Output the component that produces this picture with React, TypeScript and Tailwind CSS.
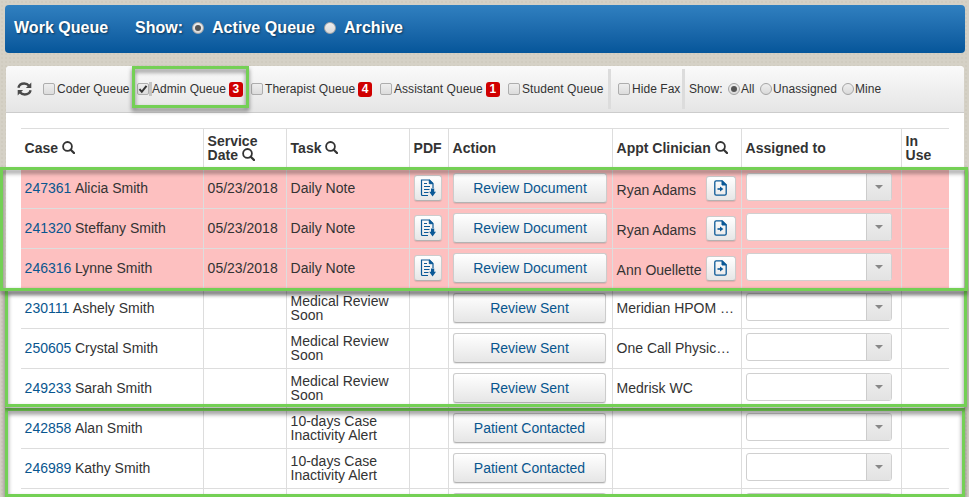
import React from "react";

type Row = { id: string; name: string; date?: string; task: string; pdf?: boolean; action: string; clinician?: string };

const rows: Row[] = [
  { id: "247361", name: "Alicia Smith", date: "05/23/2018", task: "Daily Note", pdf: true, action: "Review Document", clinician: "Ryan Adams" },
  { id: "241320", name: "Steffany Smith", date: "05/23/2018", task: "Daily Note", pdf: true, action: "Review Document", clinician: "Ryan Adams" },
  { id: "246316", name: "Lynne Smith", date: "05/23/2018", task: "Daily Note", pdf: true, action: "Review Document", clinician: "Ann Ouellette" },
  { id: "230111", name: "Ashely Smith", task: "Medical Review Soon", action: "Review Sent", clinician: "Meridian HPOM …" },
  { id: "250605", name: "Crystal Smith", task: "Medical Review Soon", action: "Review Sent", clinician: "One Call Physic…" },
  { id: "249233", name: "Sarah Smith", task: "Medical Review Soon", action: "Review Sent", clinician: "Medrisk WC" },
  { id: "242858", name: "Alan Smith", task: "10-days Case Inactivity Alert", action: "Patient Contacted" },
  { id: "246989", name: "Kathy Smith", task: "10-days Case Inactivity Alert", action: "Patient Contacted" },
  { id: "", name: "", task: "", action: "" },
];

const grid = "grid grid-cols-[182px_83px_123px_39px_164px_129px_160px_48px]";
const cell = "flex items-center border-l border-[#ddd] pl-[3.6px]";
const btn =
  "flex items-center justify-center rounded-[3px] border border-[#ccc] border-b-[#b3b3b3] bg-gradient-to-b from-white to-[#e6e6e6] shadow-[0_1px_1px_rgba(0,0,0,0.1)]";

function SearchIcon() {
  return (
    <svg className="ml-[4px] inline-block shrink-0" width="13" height="13" viewBox="0 0 13 13" fill="none" stroke="#333">
      <circle cx="5.5" cy="5.4" r="4.4" strokeWidth="1.8" />
      <path d="M8.7 8.7 12 12" strokeWidth="2.3" strokeLinecap="round" />
    </svg>
  );
}

function RefreshIcon() {
  return (
    <svg width="15" height="14" viewBox="0 0 15 14" fill="none" stroke="#4a4a4a" strokeWidth="2.4">
      <path d="M1.400 5.700C2 3.200 4.500 1.500 7.300 1.500c2.100 0 3.600.8 4.800 2.200" />
      <path d="M13.600 8.300c-.6 2.500-3.100 4.200-5.900 4.200-2.100 0-3.600-.8-4.800-2.200" />
      <path d="M14.300.5v5.400H8.900zM.7 13.500V8.100h5.400z" fill="#4a4a4a" stroke="none" />
    </svg>
  );
}

function PdfIcon() {
  return (
    <svg className="mb-px" width="16" height="18" viewBox="0 0 16 18" fill="none" stroke="#0a5896">
      <path d="M8 16.500H2.500c-.6 0-1-.4-1-1V1h8l3.500 3.500V9" strokeWidth="1.2" />
      <path d="M9.300 1v3.700H13z" fill="#0a5896" />
      <path d="M4 4.500h3M4 7.500h6M4 10.500h5.500M4 13.500h4.500" />
      <path d="M11 9.500h3.200v3.300H16L12.600 17.500 9.200 12.800H11z" fill="#0a5896" stroke="none" />
    </svg>
  );
}

function GoIcon() {
  return (
    <svg className="mb-px" width="13" height="16" viewBox="0 0 13 16" fill="none" stroke="#0a5896">
      <path d="M2.200.8h6l4 4v9c0 .8-.5 1.400-1.400 1.400H2.200C1.300 15.200.8 14.600.8 13.800V2.200C.8 1.300 1.300.8 2.200.8Z" strokeWidth="1.3" />
      <path d="M8 .8v4.200h4.200z" fill="#0a5896" />
      <path d="M3.500 9h3" strokeWidth="1.600" />
      <path d="M6 6.400 9.300 9 6 11.600z" fill="#0a5896" stroke="none" />
    </svg>
  );
}

function Check({ on }: { on?: boolean }) {
  return (
    <span className="flex h-[12px] w-[12px] shrink-0 items-center justify-center rounded-[2px] border border-[#adadad] bg-gradient-to-b from-[#eee] to-[#dcdcdc]">
      {on && (
        <svg width="10" height="10" viewBox="0 0 10 10" fill="none" stroke="#333" strokeWidth="2">
          <path d="M1.500 5.200 3.800 7.800 8.500 1.800" />
        </svg>
      )}
    </span>
  );
}

function Radio({ on }: { on?: boolean }) {
  return (
    <span className="flex h-[12px] w-[12px] shrink-0 items-center justify-center rounded-full border border-[#a5a5a5] bg-gradient-to-b from-[#eee] to-[#dadada]">
      {on && <span className="h-[6px] w-[6px] rounded-full bg-[#555]" />}
    </span>
  );
}

function Queue({ label, count, on, className }: { label: string; count?: number; on?: boolean; className: string }) {
  return (
    <label className={`flex shrink-0 items-center whitespace-nowrap ${className}`}>
      <Check on={on} />
      <span className={`h-[14px] shrink-0 ${on ? "w-[3px] bg-[#c4c4c4]" : "w-[2px]"}`} />
      {label}
      {count !== undefined && (
        <span className="ml-[3px] flex h-[15px] w-[14px] items-center justify-center rounded-[3px] bg-[#d00000] text-[12px] font-bold text-white">
          {count}
        </span>
      )}
    </label>
  );
}

function Combo() {
  return (
    <div className="mb-[3px] ml-[0.4px] flex h-[28px] w-[146px] overflow-hidden rounded-[3px] border border-[#d0d0d0] bg-white">
      <div className="flex-1" />
      <div className="flex w-[25px] items-center justify-center border-l border-[#ccc] bg-gradient-to-b from-[#f0f0f0] to-[#e3e3e3]">
        <span className="mb-px border-x-4 border-t-4 border-x-transparent border-t-[#888]" />
      </div>
    </div>
  );
}

function QueueRow({ row }: { row: Row }) {
  return (
    <div className={`${grid} h-[40px] border-t border-[#ddd] ${row.pdf ? "bg-[#fdc0c0]" : ""}`}>
      <div className="flex items-center pl-[3.6px] text-[#333]">
        <a className="mr-[3.6px] text-[#08568f]">{row.id}</a>
        {row.name}
      </div>
      <div className={cell}>{row.date}</div>
      <div className={`${cell} pb-[2px] leading-[14px]`}><span className="w-[100px]">{row.task}</span></div>
      <div className={cell}>
        {row.pdf && <button className={`${btn} mb-px ml-[0.4px] h-[26px] w-[28px]`}><PdfIcon /></button>}
      </div>
      <div className={cell}>
        <button className={`${btn} mb-px ml-[0.4px] h-[30px] text-[#08568f] ${row.pdf ? "w-[154px]" : "w-[153px]"}`}>{row.action}</button>
      </div>
      <div className={`${cell} whitespace-nowrap`}>
        <span className={`w-[89.4px] ${row.pdf ? "pt-[3px]" : ""}`}>{row.clinician}</span>
        {row.pdf && <button className={`${btn} h-[25px] w-[30px]`}><GoIcon /></button>}
      </div>
      <div className={cell}><Combo /></div>
      <div className={cell} />
    </div>
  );
}

const frame =
  "pointer-events-none absolute border-[3px] border-[#74d055] drop-shadow-[0px_3px_2px_rgba(0,0,0,0.5)]";

export default function App() {
  return (
    <div className="relative h-[497px] w-[969px] overflow-hidden bg-[#d5d1c6] bg-[radial-gradient(#cbc6b9_0.6px,transparent_0.8px)] bg-[size:4px_4px] pt-[5px] font-['Liberation_Sans',Arial,sans-serif] text-[14px] text-[#333]">
      <header className="ml-[5px] flex h-[48px] w-[960px] items-center rounded-[4px] bg-gradient-to-b from-[#3080c0] to-[#05569a] pb-[3px] pl-[9px] text-[16px] font-bold text-white [text-shadow:1px_1px_2px_rgba(0,0,0,0.5)]">
        <span className="w-[121px] tracking-[0.03px]">Work Queue</span>
        <span className="w-[57px]">Show:</span>
        <Radio on />
        <span className="ml-[8px] w-[112px] whitespace-nowrap tracking-[0.05px]">Active Queue</span>
        <Radio />
        <span className="ml-[8px] tracking-[0.05px]">Archive</span>
      </header>

      <main className="ml-[6px] mt-[13px] h-[440px] w-[958px] rounded-t-[4px] bg-white">
        <div className="flex h-[47px] items-center rounded-t-[4px] border-b border-[#ccc] bg-gradient-to-b from-[#fafafa] to-[#e5e5e5] pl-[11px] text-[12px] tracking-[0.05px]">
          <span className="w-[26px]"><RefreshIcon /></span>
          <Queue label="Coder Queue" className="w-[94px]" />
          <Queue label="Admin Queue" count={3} on className="w-[114px]" />
          <Queue label="Therapist Queue" count={4} className="w-[129px]" />
          <Queue label="Assistant Queue" count={1} className="w-[128px]" />
          <Queue label="Student Queue" className="w-[100px]" />
          <span className="h-[40px] w-[3px] bg-[#dcdcdc]" />
          <Queue label="Hide Fax" className="ml-[7px] w-[64px]" />
          <span className="h-[40px] w-[3px] bg-[#dcdcdc]" />
          <span className="ml-[4px] w-[39px]">Show:</span>
          <label className="flex w-[32px] items-center gap-px"><Radio on />All</label>
          <label className="flex w-[82px] items-center gap-px"><Radio />Unassigned</label>
          <label className="flex items-center gap-px"><Radio />Mine</label>
        </div>

        <div className="ml-[15px] mt-[15px] w-[928px]">
          <div className={`${grid} h-[40px] border-t border-[#ddd] font-bold leading-[14px] [&>div]:pb-[2px]`}>
            <div className="flex items-center pl-[3.6px]">Case<SearchIcon /></div>
            <div className={cell}>
              <div>
                <div>Service</div>
                <div className="flex h-[14px] items-center">Date<SearchIcon /></div>
              </div>
            </div>
            <div className={cell}>Task<SearchIcon /></div>
            <div className={cell}>PDF</div>
            <div className={cell}>Action</div>
            <div className={`${cell} whitespace-nowrap`}>Appt Clinician<SearchIcon /></div>
            <div className={cell}>Assigned to</div>
            <div className={cell}><span className="w-[30px]">In Use</span></div>
          </div>
          {rows.map((row, i) => <QueueRow key={i} row={row} />)}
        </div>
      </main>

      <div className={`${frame} left-[5px] top-[408px] h-[89px] w-[960px]`} />
      <div className={`${frame} left-[5px] top-[288px] h-[119px] w-[962px]`} />
      <div className={`${frame} left-0 top-[167px] h-[124px] w-[968px]`} />
      <div className={`${frame} left-[132px] top-[66px] h-[42px] w-[117px]`} />
    </div>
  );
}
